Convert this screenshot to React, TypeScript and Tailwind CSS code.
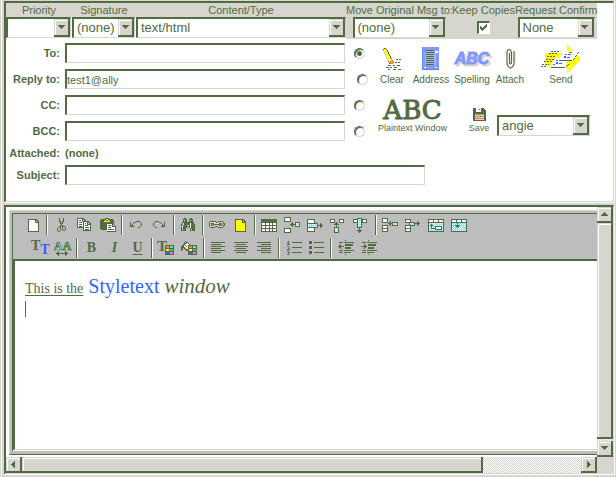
import React from "react";

const PALETTE: Record<string, string> = {
  G: "#526b42",
  W: "#ffffff",
  Y: "#ffff00",
  C: "#5adede",
  L: "#d6d6ce",
  R: "#ff8442",
  N: "#3163ff",
  M: "#ff63ff",
  E: "#31ce4a",
};

/* Draws a small bitmap, one unit square for each character; K is a cyan and white checker. */
function Pixels({ rows, x = 0, y = 0 }: { rows: string[]; x?: number; y?: number }) {
  return (
    <g>
      {rows.flatMap((row, j) =>
        row.split("").map((c, i) => {
          const fill = c === "K" ? ((i + j) % 2 ? "#63efef" : "#ffffff") : PALETTE[c];
          return fill ? <rect key={`${i}-${j}`} x={x + i} y={y + j} width="1" height="1" fill={fill} /> : null;
        }),
      )}
    </g>
  );
}

const PAGE = [
  "GGGGGGGGG..",
  "GWWWWWWGGG.",
  "GWWWWWWGWGG",
  "GWWWWWWGGGG",
  "GWWWWWWWWWG",
  "GWWWWWWWWWG",
  "GWWWWWWWWWG",
  "GWWWWWWWWWG",
  "GWWWWWWWWWG",
  "GWWWWWWWWWG",
  "GWWWWWWWWWG",
  "GWWWWWWWWWG",
  "GGGGGGGGGGG",
];
const SCISSORS = [
  "..G...G..",
  "..G...G..",
  "..G...G..",
  "..GG.GG..",
  "...G.G...",
  "...GGG...",
  "....G....",
  "...GGG...",
  "..GG.GGG.",
  ".G.G.G..G",
  "G..G.G..G",
  "G..G.G..G",
  "G..G..GG.",
  ".GG......",
];
const COPY = [
  "GGGGGGG.........",
  "GWWWWGGG........",
  "GWGGWGWGG.......",
  "GWWWWGGGGGGG....",
  "GWGGGWGWWWGGG...",
  "GWWWWWGWGWGWGG..",
  "GWGGGWGWWWGGGG..",
  "GWWWWWGWGGGWWG..",
  "GWGGGWGWWWWWWG..",
  "GGGGGGGWGGGGWG..",
  "......GWWWWWWG..",
  "......GWGGGGWG..",
  "......GGGGGGGG..",
];
const PASTE = [
  ".....GGGG.......",
  ".GGGGGYYGGGGG...",
  "GGGGGYGGYGGGGG..",
  "GGGGYYYYYYGGGG..",
  "GGGGGGGGGGGGGG..",
  "GGGGGGGGGGGGGG..",
  "GGGGGGGWWWWWGG..",
  "GGGGGGGWGGGWGWG.",
  "GGGGGGGWWWWWGGGG",
  "GGGGGGGWGGGWWWWG",
  "GGGGGGGWWWWWWWWG",
  ".GGGGGGWGGGGGGWG",
  ".......WWWWWWWWG",
  ".......GGGGGGGGG",
];
const UNDO = [
  "......GGGG..",
  "G...GG....G.",
  "G..G.......G",
  "G.G........G",
  "GGG........G",
  "GGGG......G.",
  "........GG..",
];
const BINOCULARS = [
  "...GG....GG...",
  "..GGGG..GGGG..",
  "..GWGG..GWGG..",
  "..GGGG..GGGG..",
  ".GGGGGGGGGGGG.",
  ".GWGGGGGGWGGG.",
  "GGWGGGGGGWGGGG",
  "GWGGGGLLGWGGGG",
  "GWGGGGGGGWGGGG",
  "GWGGGG..GWGGGG",
  "GGGGG....GGGGG",
  "GWGGG....GWGGG",
  "GGGGG....GGGGG",
];
const LINK = [
  ".GGGGGG..GGGGG..",
  "GLLLLLLGGLLLLLG.",
  "GLGGGLLLLLGGGLGG",
  "GLG.GGGGGGGG.GLG",
  "GLGGGLLLLLGGGLGG",
  "GLLLLLGGGLLLLLG.",
  ".GGGGG...GGGGG..",
];
const SWATCHES = [
  "GGGGGGGGG",
  "GRRRGCCCG",
  "GRRRGCCCG",
  "GGGGGGGGG",
  "GYYYGEEEG",
  "GYYYGEEEG",
  "GGGGGGGGG",
  "GNNNGMMMG",
  "GNNNGMMMG",
  "GGGGGGGGG",
];
const BUCKET = [
  "....G......",
  "...G.GG....",
  "...GGGWG...",
  "..GGWWWWG..",
  ".GGWGWWWWG.",
  "GGGWWGWWWGG",
  "GGGGWWWWGG.",
  "GG.GGWWGG..",
  "GG..GGGG...",
  "G....GG....",
];
const FLOPPY = [
  "GGGWWWWWGGG..",
  "GGGWLWGWGGGG.",
  "GGGWWWWWGGGGG",
  "GGGWWWWWGGGGG",
  "GGGGGGGGGGGGG",
  "GGGGGGGGGGGGG",
  "GGRRRGRRRRRGG",
  "GGLLLLLLLLLGG",
  "GGRRRRRGRRRGG",
  "GGLLLLLLLLLGG",
  "GGRRGRRRRRRGG",
  "GGLLLLLLLLLGG",
  "GGGGGGGGGGGGG",
];
const PENCIL = [
  ".GG........",
  "GYYG.......",
  "LYYYG......",
  "LYYYG......",
  ".LYYYG.....",
  ".LYYYG.....",
  "..LYYYG....",
  "..LYYYG....",
  "...LYYYG...",
  "...LYYYG...",
  "....LYYYG..",
  "....LYYYL..",
  ".....LYLLR.",
  ".....GLRRRR",
  "......RRRRR",
  "......GRRR.",
];

function Box({ x, y, w, h, cyan }: { x: number; y: number; w: number; h: number; cyan?: boolean }) {
  return (
    <g>
      <rect x={x} y={y} width={w} height={h} fill="#526b42" />
      {cyan ? (
        <Pixels x={x + 1} y={y + 1} rows={Array.from({ length: h - 2 }, () => "K".repeat(w - 2))} />
      ) : (
        <rect x={x + 1} y={y + 1} width={w - 2} height={h - 2} fill="white" />
      )}
    </g>
  );
}

function Lines({ items }: { items: number[][] }) {
  return (
    <g fill="#526b42">
      {items.map(([x, y, w, h = 1]) => (
        <rect key={`${x}-${y}`} x={x} y={y} width={w} height={h} />
      ))}
    </g>
  );
}

const ARROW = {
  left: ["..G...", ".GG...", "GGGGGG", ".GG...", "..G..."],
  right: ["...G..", "...GG.", "GGGGGG", "...GG.", "...G.."],
  up: ["..G..", ".GGG.", "GGGGG", "..G..", "..G.."],
  down: ["..G..", "..G..", "GGGGG", ".GGG.", "..G.."],
};

function Tool({ label, children }: { label: string; children: React.ReactNode }) {
  return (
    <button type="button" aria-label={label} title={label} className="flex h-5 w-[23px] shrink-0 items-center justify-center">
      <svg width="20" height="18" viewBox="0 0 20 18" shapeRendering="crispEdges" fill="#526b42">
        {children}
      </svg>
    </button>
  );
}

function LetterTool({ label, className, children }: { label: string; className: string; children: React.ReactNode }) {
  return (
    <button
      type="button"
      aria-label={label}
      className={`h-5 w-[23px] shrink-0 text-center font-['Liberation_Serif',serif] text-sm leading-5 font-bold ${className}`}
    >
      {children}
    </button>
  );
}

function Divider() {
  return <span className="mx-0.5 h-5 w-0.5 shrink-0 border-r border-l border-r-white border-l-[#526b42]" />;
}

const HEADS = {
  up: "M0 5h7v-1h-1v-1h-1v-1h-1v-1h-1v1h-1v1h-1v1h-1z",
  down: "M0 1h7v1h-1v1h-1v1h-1v1h-1v-1h-1v-1h-1v-1h-1z",
  left: "M5 0v7h-1v-1h-1v-1h-1v-1h-1v-1h1v-1h1v-1h1v-1z",
  right: "M2 0v7h1v-1h1v-1h1v-1h1v-1h-1v-1h-1v-1h-1v-1z",
};

function Arrow({ dir }: { dir: keyof typeof HEADS }) {
  return (
    <svg width="7" height="7" viewBox="0 0 7 7" shapeRendering="crispEdges">
      <path d={HEADS[dir]} fill="#526b42" />
    </svg>
  );
}

const RAISED = "border-r-2 border-b-2 border-[#526b42] bg-[#d6d6ce] shadow-[inset_1px_1px_0_#d6d6ce,inset_2px_2px_0_#ffffff]";

function Dropdown({ id, label, options, width }: { id: string; label?: string; options: string[]; width: string }) {
  return (
    <div className={`flex h-[21px] border-t-2 border-r border-b border-l-2 border-t-[#526b42] border-r-[#d6d6ce] border-b-[#d6d6ce] border-l-[#526b42] bg-white ${width}`}>
      <select id={id} aria-label={label} className="min-w-0 flex-1 appearance-none bg-white pl-[3px] text-[13px] leading-4 outline-none">
        {options.map((o) => (
          <option key={o}>{o}</option>
        ))}
      </select>
      <span className={`pointer-events-none flex w-4 shrink-0 items-center justify-center ${RAISED}`}>
        <Arrow dir="down" />
      </span>
    </div>
  );
}

const FIELD =
  "h-5 border-t-2 border-r border-b border-l-2 border-t-[#526b42] border-r-[#d6d6ce] border-b-[#d6d6ce] border-l-[#526b42] bg-white text-[11px] outline-none";

function AddressRow({ id, label, value, checked, radio }: { id: string; label: string; value?: string; checked?: boolean; radio: string }) {
  return (
    <div className="flex h-[26px] items-center">
      <label htmlFor={id} className="w-[54px] text-right font-bold">
        {label}
      </label>
      <input id={id} defaultValue={value} className={`ml-[5px] w-[280px] ${FIELD}`} />
      <input
        type="radio"
        name="target"
        aria-label={`Add addresses to ${label}`}
        defaultChecked={checked}
        className={`size-[11px] appearance-none rounded-full border border-t-[#526b42] border-r-[#d6d6ce] border-b-[#d6d6ce] border-l-[#526b42] bg-white shadow-[inset_1px_1px_0_#526b42] checked:bg-[radial-gradient(#526b42_2px,#ffffff_3px)] ${radio}`}
      />
    </div>
  );
}

function Action({ label, width, children }: { label: string; width: string; children: React.ReactNode }) {
  return (
    <button type="button" className={`flex shrink-0 flex-col items-center text-[10px] leading-3 whitespace-nowrap ${width}`}>
      <span className="flex h-[30px] items-center">{children}</span>
      {label}
    </button>
  );
}

function HeaderCell({ id, label, width, children }: { id: string; label: string; width: string; children: React.ReactNode }) {
  return (
    <div className={`shrink-0 ${width}`}>
      <label htmlFor={id} className="block h-3.5 bg-[#d6d6ce] text-center leading-[15px] whitespace-nowrap">
        {label}
      </label>
      {children}
    </div>
  );
}

function Frame({ className, children }: { className: string; children: React.ReactNode }) {
  return (
    <div className={`flex border-r border-b border-white ${className}`}>
      <div className="min-w-0 flex-1 border-t-2 border-r border-b border-l-2 border-t-[#526b42] border-r-[#d6d6ce] border-b-[#d6d6ce] border-l-[#526b42] bg-white">
        {children}
      </div>
    </div>
  );
}

const INDENT_LINES = [[9, 1, 1], [3, 3, 4], [8, 3, 10], [9, 5, 8, 2], [9, 8, 6, 2], [3, 11, 4], [8, 11, 10], [3, 13, 4], [8, 13, 7], [9, 15, 1]];
const TRACK = "bg-[repeating-conic-gradient(#d6d6ce_0_25%,#ffffff_0_50%)] bg-size-[2px_2px]";

export default function App() {
  return (
    <div className="flex h-screen flex-col border-l border-[#d6d6ce] bg-[#d6d6ce] font-['Liberation_Sans',Arial,sans-serif] text-[11px] text-[#526b42]">
      <div className="flex min-h-0 flex-1 flex-col gap-0.5 border-l border-white pt-px pr-px pb-0.5 pl-0.5">
        <Frame className="shrink-0">
          <div className="flex">
            <HeaderCell id="priority" label="Priority" width="w-[66px]">
              <Dropdown id="priority" options={[""]} width="w-[65px]" />
            </HeaderCell>
            <HeaderCell id="signature" label="Signature" width="w-16">
              <Dropdown id="signature" options={["(none)"]} width="w-[63px]" />
            </HeaderCell>
            <HeaderCell id="content" label="Content/Type" width="w-[210px]">
              <Dropdown id="content" options={["text/html"]} width="w-[210px]" />
            </HeaderCell>
            <div className="flex bg-[#d6d6ce] pb-px">
              <HeaderCell id="move" label="Move Original Msg to:" width="w-[106px]">
                <Dropdown id="move" options={["(none)"]} width="mx-auto w-[93px]" />
              </HeaderCell>
              <HeaderCell id="keep" label="Keep Copies" width="w-[63px]">
                <div className="flex h-[21px] items-center justify-center">
                  <input
                    id="keep"
                    type="checkbox"
                    defaultChecked
                    className="peer size-[13px] appearance-none border-t-2 border-r border-b border-l-2 border-t-[#526b42] border-r-white border-b-white border-l-[#526b42] bg-white"
                  />
                  <svg className="pointer-events-none mr-0.5 -ml-[11px] hidden peer-checked:block" width="9" height="9" shapeRendering="crispEdges">
                    <path d="M1 3h1v1h1v1h1v-1h1v-1h1v-1h1v-1h1v3h-1v1h-1v1h-1v1h-1v1h-1v-1h-1v-1h-1z" fill="#526b42" />
                  </svg>
                </div>
              </HeaderCell>
              <HeaderCell id="confirm" label="Request Confirm" width="w-[82px]">
                <Dropdown id="confirm" options={["None"]} width="mx-auto w-[77px]" />
              </HeaderCell>
            </div>
          </div>

          <div className="flex pt-px">
            <div className="w-[362px] shrink-0">
              <AddressRow id="to" label="To:" checked radio="ml-[9px]" />
              <AddressRow id="reply" label="Reply to:" value="test1@ally" radio="ml-3" />
              <AddressRow id="cc" label="CC:" radio="ml-[9px]" />
              <AddressRow id="bcc" label="BCC:" radio="ml-[9px]" />
            </div>
            <div className="pt-1 pl-1.5">
              <div className="flex">
                <Action label="Clear" width="w-9">
                  <svg width="20" height="24" viewBox="0 0 20 24" shapeRendering="crispEdges">
                    <Pixels rows={PENCIL} x={1} y={1} />
                    <Lines items={[[14, 12, 2], [17, 12, 2], [13, 15, 2], [16, 15, 2], [6, 18, 3], [11, 18, 2], [15, 18, 3], [4, 20, 3], [8, 20, 2], [12, 20, 3], [6, 22, 2], [11, 22, 3], [16, 22, 3]]} />
                  </svg>
                </Action>
                <Action label="Address" width="w-[42px]">
                  <svg width="18" height="24" viewBox="0 0 18 24" shapeRendering="crispEdges">
                    <path d="M0 0h17v22h-2v1h-4v-1h-6v1h-4v-1h-1z" fill="#8499ff" />
                    <path d="M0 22h17v1h-17z" fill="#5a84ff" />
                    <path d="M3 3h11v15h-11z" fill="#a5b5ff" />
                    <Lines items={[[3, 3, 9], [4, 5, 10], [4, 7, 8], [4, 9, 8], [4, 11, 8], [4, 13, 8], [4, 15, 8], [4, 17, 8]]} />
                    <path d="M13 4h3v2h-3zM2 20h2v1h-2zM13 20h2v1h-2z" fill="white" />
                    <path d="M0 0h1v22h-1z" fill="#6b8cf7" />
                  </svg>
                </Action>
                <Action label="Spelling" width="w-10">
                  <span className="text-base leading-6 font-bold text-[#8499ff] italic drop-shadow-[2px_2px_0_#d6d6ce] [-webkit-text-stroke:1px_#8499ff]" aria-hidden="true">
                    ABC
                  </span>
                </Action>
                <Action label="Attach" width="w-9">
                  <svg width="11" height="22" viewBox="0 0 11 22" fill="none">
                    <path d="M10 4v11q-.5 4-3.500 5" stroke="#d6d6ce" />
                    <path d="M9 3v12q-.5 4-3.500 5q-3-1-3.500-5V5q0-3.500 2-3.500T6.500 5v9q0 2-1 2t-1-2V5" stroke="#526b42" strokeWidth="1.200" />
                  </svg>
                </Action>
                <Action label="Send" width="w-[66px]">
                  <svg width="40" height="28" viewBox="0 0 40 28" shapeRendering="crispEdges">
                    <path d="M4 8h16l-4 13h-12zM26 0l13 13v2l-13 13v-7h-10l8-13h2z" fill="#ffff00" />
                    <path d="M23 6h15l-6 9h-15z" fill="white" />
                    <path d="M14 13h15l-5 9h-15z" fill="white" />
                    <path d="M10 6.500h9M8 8.500h9M6 11.500h9M5 14.500h8M3 16.500h8M1 19.500h7M0 21.500h5" stroke="#526b42" strokeDasharray="2 1" />
                    <path d="M10 22.500h14M25 21.500h1M26 20.500h1M27 19.500h1M18 15.500h13M32 14.500h1M33 13.500h1M34 11.500h1M35 10.500h1M36 8.500h1M37 7.500h1" stroke="#526b42" />
                    <path d="M24 9h2v1h-2zM27 9h3v1h-3zM23 11h2v2h-2zM26 12h3v1h-3zM28 7h3v1h-3zM15 15h2v1h-2zM18 15h2v1h-2zM15 17h2v2h-2zM18 18h3v1h-3zM12 19h2v1h-2z" fill="#3163ff" />
                  </svg>
                </Action>
              </div>
              <div className="flex items-end pt-3">
                <button type="button" className="flex w-[77px] flex-col items-center text-[9px] leading-3 whitespace-nowrap">
                  <span className="font-['DejaVu_Serif',serif] text-[26px] leading-6 [-webkit-text-stroke:1px_#526b42]" aria-hidden="true">
                    ABC
                  </span>
                  Plaintext Window
                </button>
                <button type="button" className="ml-2.5 flex w-9 flex-col items-center text-[9px] leading-3">
                  <svg width="13" height="14" viewBox="0 0 13 14" shapeRendering="crispEdges">
                    <Pixels rows={FLOPPY} />
                  </svg>
                  Save
                </button>
                <Dropdown id="book" label="Save to book" options={["angie"]} width="-mb-0.5 w-[93px]" />
              </div>
            </div>
          </div>

          <div className="flex h-[18px] items-center font-bold">
            <span className="w-[54px] text-right">Attached:</span>
            <span className="ml-[5px]">(none)</span>
          </div>
          <div className="mb-[13px] flex h-[26px] items-center">
            <label htmlFor="subject" className="w-[54px] text-right font-bold">
              Subject:
            </label>
            <input id="subject" className={`ml-[5px] w-[360px] ${FIELD}`} />
          </div>
        </Frame>

        <Frame className="min-h-0 flex-1">
          <div className="grid h-full grid-cols-[minmax(0,1fr)_16px] grid-rows-[minmax(0,1fr)_16px] bg-[#d6d6ce]">
            <div className="flex overflow-hidden bg-white pt-[3px] pb-0.5 pl-[3px]">
              <div className="flex min-w-0 flex-1 border-t border-b border-l border-t-[#d6d6ce] border-b-[#526b42] border-l-[#d6d6ce] bg-[#bdbdbd] pt-0.5 pb-[3px] pl-0.5">
                <div className="flex min-w-0 flex-1 flex-col border-t border-l border-[#526b42]">
                  <div className="flex flex-col gap-[3px] overflow-hidden py-px" role="toolbar" aria-label="Formatting">
                    <div className="flex pl-2">
                      <Tool label="New">
                        <Pixels rows={PAGE} x={5} y={3} />
                      </Tool>
                      <Divider />
                      <Tool label="Cut">
                        <Pixels rows={SCISSORS} x={5} y={2} />
                      </Tool>
                      <Tool label="Copy">
                        <Pixels rows={COPY} x={2} y={2} />
                      </Tool>
                      <Tool label="Paste">
                        <Pixels rows={PASTE} x={2} y={2} />
                      </Tool>
                      <Divider />
                      <Tool label="Undo">
                        <Pixels rows={UNDO} x={3} y={5} />
                      </Tool>
                      <Tool label="Redo">
                        <Pixels rows={UNDO.map((r) => r.split("").reverse().join(""))} x={3} y={5} />
                      </Tool>
                      <Divider />
                      <Tool label="Find">
                        <Pixels rows={BINOCULARS} x={2} y={2} />
                      </Tool>
                      <Divider />
                      <Tool label="Insert link">
                        <Pixels rows={LINK} x={1} y={5} />
                      </Tool>
                      <Tool label="Insert note">
                        <Pixels rows={PAGE.map((r) => r.replace(/W/g, "Y"))} x={4} y={3} />
                      </Tool>
                      <Divider />
                      <Tool label="Insert table">
                        <Lines items={[[1, 3, 16, 13]]} />
                        <g fill="white">
                          {[7, 10, 13].flatMap((y) => [2, 6, 10, 13].map((x) => <rect key={`${x}-${y}`} x={x} y={y} width={x === 10 ? 2 : 3} height="2" />))}
                        </g>
                      </Tool>
                      <Tool label="Insert row">
                        <Box x={1} y={1} w={7} h={5} />
                        <Box x={1} y={12} w={7} h={5} />
                        <Pixels rows={ARROW.left} x={7} y={6} />
                        <Box x={12} y={6} w={5} h={5} cyan />
                      </Tool>
                      <Tool label="Delete row">
                        <Box x={1} y={3} w={8} h={5} />
                        <Box x={1} y={11} w={8} h={5} />
                        <Box x={1} y={7} w={11} h={5} cyan />
                        <Pixels rows={ARROW.right} x={11} y={7} />
                      </Tool>
                      <Tool label="Insert column">
                        <Box x={1} y={3} w={5} h={4} />
                        <Box x={10} y={3} w={5} h={4} />
                        <Pixels rows={ARROW.up} x={5} y={6} />
                        <Box x={5} y={11} w={5} h={6} cyan />
                      </Tool>
                      <Tool label="Delete column">
                        <Box x={1} y={3} w={5} h={4} />
                        <Box x={10} y={3} w={5} h={4} />
                        <Box x={5} y={2} w={5} h={10} cyan />
                        <Pixels rows={ARROW.down} x={5} y={12} />
                      </Tool>
                      <Divider />
                      <Tool label="Insert cell">
                        <Box x={1} y={2} w={6} h={5} />
                        <Box x={1} y={9} w={6} h={4} />
                        <Box x={1} y={12} w={6} h={4} />
                        <Pixels rows={ARROW.left} x={7} y={5} />
                        <Box x={11} y={6} w={6} h={4} cyan />
                      </Tool>
                      <Tool label="Delete cell">
                        <Box x={1} y={3} w={6} h={4} />
                        <Box x={1} y={9} w={6} h={4} />
                        <Box x={1} y={12} w={6} h={4} />
                        <Box x={5} y={6} w={6} h={4} cyan />
                        <Pixels rows={ARROW.right} x={10} y={5} />
                      </Tool>
                      <Tool label="Merge cells">
                        <Box x={1} y={3} w={16} h={13} cyan />
                        <Box x={1} y={3} w={6} h={4} />
                        <Box x={6} y={3} w={6} h={4} />
                        <Box x={11} y={3} w={6} h={4} />
                        <Box x={8} y={10} w={7} h={4} />
                        <Lines items={[[4, 8, 1, 5], [3, 9, 3], [4, 12, 4]]} />
                      </Tool>
                      <Tool label="Split cell">
                        <Box x={1} y={3} w={16} h={13} cyan />
                        <Box x={1} y={3} w={6} h={4} />
                        <Box x={6} y={3} w={6} h={4} />
                        <Box x={11} y={3} w={6} h={4} />
                        <Pixels rows={ARROW.down} x={5} y={7} />
                      </Tool>
                    </div>
                    <div className="flex pl-[15px]">
                      <Tool label="Font size">
                        <text x="1" y="11" fontFamily="Liberation Serif, serif" fontWeight="bold" fontSize="14">
                          T
                          <tspan dy="4" fill="#3163ff">
                            T
                          </tspan>
                        </text>
                      </Tool>
                      <Tool label="Font face">
                        <text x="1" y="11" fontFamily="Liberation Serif, serif" fontWeight="bold" fontSize="12" stroke="#526b42" strokeWidth=".6">
                          <tspan fill="#63efef">A</tspan>
                          <tspan fill="#31ce4a">A</tspan>
                        </text>
                        <path d="M3 14h1v-1h1v-1h1v2h6v-2h1v1h1v1h1v1h-1v1h-1v1h-1v-2h-6v2h-1v-1h-1v-1h-1z" />
                      </Tool>
                      <Divider />
                      <LetterTool label="Bold" className="">B</LetterTool>
                      <LetterTool label="Italic" className="italic">I</LetterTool>
                      <LetterTool label="Underline" className="underline underline-offset-2">U</LetterTool>
                      <Divider />
                      <Tool label="Text colour">
                        <text x="0" y="12" fontSize="15" fontFamily="Liberation Serif, serif" fontWeight="bold">T</text>
                        <Pixels rows={SWATCHES} x={8} y={6} />
                      </Tool>
                      <Tool label="Fill colour">
                        <Pixels rows={BUCKET} x={1} y={2} />
                        <Pixels rows={SWATCHES} x={8} y={6} />
                      </Tool>
                      <Divider />
                      <Tool label="Align left">
                        <Lines items={[[2, 3, 14], [2, 5, 10], [2, 7, 14], [2, 9, 10], [2, 11, 14], [2, 13, 10]]} />
                      </Tool>
                      <Tool label="Align centre">
                        <Lines items={[[2, 3, 14], [4, 5, 10], [2, 7, 14], [4, 9, 10], [2, 11, 14], [4, 13, 10]]} />
                      </Tool>
                      <Tool label="Align right">
                        <Lines items={[[2, 3, 14], [6, 5, 10], [2, 7, 14], [6, 9, 10], [2, 11, 14], [6, 13, 10]]} />
                      </Tool>
                      <Divider />
                      <Tool label="Numbered list">
                        <Pixels rows={[".G.", "GG.", ".G.", "GGG", "...", "GG.", "..G", ".G.", "GGG", "...", "GG.", ".GG", "..G", "GG."]} x={3} y={2} />
                        <Lines items={[[8, 3, 10], [8, 8, 10], [8, 13, 10]]} />
                      </Tool>
                      <Tool label="Bulleted list">
                        <Lines items={[[2, 2, 3, 3], [2, 7, 3, 3], [2, 12, 3, 3], [7, 3, 10], [7, 8, 10], [7, 13, 10]]} />
                      </Tool>
                      <Divider />
                      <Tool label="Outdent">
                        <Lines items={INDENT_LINES} />
                        <Pixels rows={ARROW.left} x={2} y={5} />
                      </Tool>
                      <Tool label="Indent">
                        <Lines items={INDENT_LINES} />
                        <Pixels rows={ARROW.right} x={2} y={5} />
                      </Tool>
                    </div>
                  </div>
                  <div className="flex min-h-0 flex-1 border-b border-white">
                    <div
                      role="textbox"
                      aria-label="Message"
                      aria-multiline="true"
                      className="flex-1 overflow-hidden border-t-2 border-b border-l-2 border-t-[#526b42] border-b-[#d6d6ce] border-l-[#526b42] bg-white pt-[15px] pl-2.5 font-['Liberation_Serif','Times_New_Roman',serif] text-sm leading-5"
                    >
                      <p>
                        <u className="underline-offset-2">This is the</u>
                        <span className="text-xl leading-5 text-[#3163ff]"> Styletext </span>
                        <i className="text-[21px] leading-5">window</i>
                      </p>
                      <p className="mt-0.5 h-4 w-px bg-[#526b42]" />
                    </div>
                  </div>
                </div>
              </div>
            </div>

            <div className={`flex flex-col ${TRACK}`}>
              <button type="button" aria-label="Scroll up" className={`flex h-4 shrink-0 items-center justify-center ${RAISED}`}>
                <Arrow dir="up" />
              </button>
              <div className={`mb-0.5 flex-1 ${RAISED}`} />
              <button type="button" aria-label="Scroll down" className={`flex h-4 shrink-0 items-center justify-center ${RAISED}`}>
                <Arrow dir="down" />
              </button>
            </div>

            <div className={`flex ${TRACK}`}>
              <button type="button" aria-label="Scroll left" className={`flex w-4 shrink-0 items-center justify-center ${RAISED}`}>
                <Arrow dir="left" />
              </button>
              <div className={`mr-auto w-[78%] ${RAISED}`} />
              <button type="button" aria-label="Scroll right" className={`flex w-4 shrink-0 items-center justify-center ${RAISED}`}>
                <Arrow dir="right" />
              </button>
            </div>
          </div>
        </Frame>
      </div>
    </div>
  );
}
